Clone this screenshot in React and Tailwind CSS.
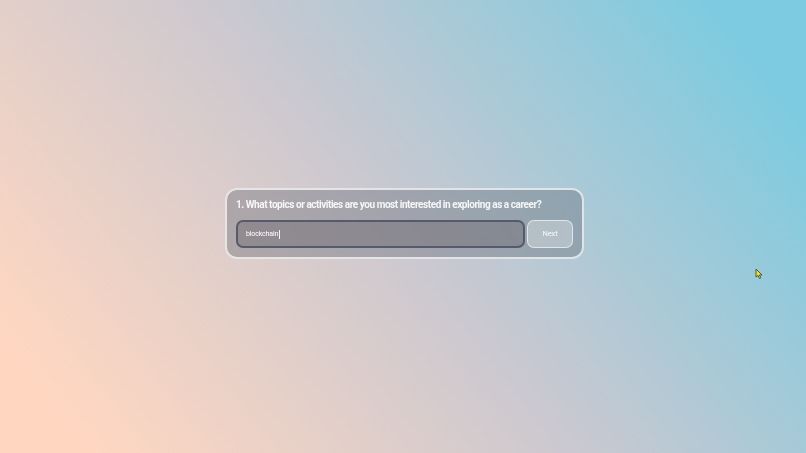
import React from 'react';

const App = () => {
  return (
    <div className="relative w-full h-screen min-h-[453px] overflow-hidden bg-linear-[52deg] from-[#ffd7c1] from-8% via-[#cac8d0] via-50% to-[#7ccbe0] to-92% font-['Roboto',sans-serif] flex items-center justify-center">
      {/* Question card */}
      <div className="w-[359px] h-[71px] mb-[6px] ml-[3px] rounded-[12px] border-2 border-white/70 bg-[#5a5f6a]/35 backdrop-blur-sm px-[9px] pt-[8px] flex flex-col">
        <h1 className="text-[10px] leading-[14px] font-bold text-white/90 tracking-[-0.045em] whitespace-nowrap">
          1. What topics or activities are you most interested in exploring as a career?
        </h1>
        <div className="flex gap-[2px] mt-[8px]">
          <div className="flex-1 h-[28px] rounded-[7px] border-2 border-[#555a6c] bg-[#6f6a72]/45 flex items-center px-[8px]">
            <span className="text-[7px] text-white tracking-[-0.02em]">blockchain</span>
            <span className="w-px h-[9px] bg-white/90 ml-px" />
          </div>
          <button className="w-[46px] h-[28px] rounded-[7px] border-[1.5px] border-white/60 bg-white/30 text-[7.5px] text-white/90 tracking-[-0.02em]">
            Next
          </button>
        </div>
      </div>

      {/* Mouse pointer */}
      <svg className="absolute left-[755px] top-[268px]" width="8" height="11" viewBox="0 0 8 11">
        <path d="M1 1 L1 9 L3 7.5 L4.5 10.5 L5.8 9.8 L4.4 7 L7 7 Z" fill="#e8e03a" stroke="#3b3a20" strokeWidth="0.8" />
      </svg>
    </div>
  );
};

export default App;
